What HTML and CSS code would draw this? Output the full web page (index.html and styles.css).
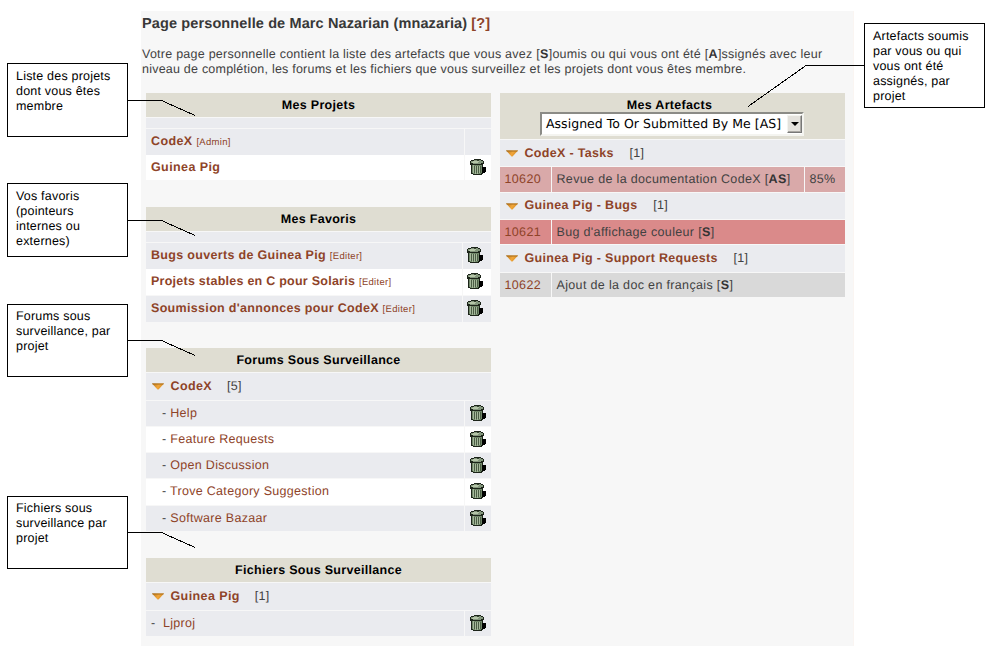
FILE: index.html
```html
<!DOCTYPE html>
<html lang="fr">
<head>
<meta charset="utf-8">
<title>Page personnelle</title>
<link rel="stylesheet" href="styles.css">
</head>
<body>
<svg class="defs" aria-hidden="true">
  <defs>
    <symbol id="trash" viewBox="0 0 16 16">
      <path fill="#1c2419" d="M4 0h7v1h2v1h1v3h-1v3h3v5h-3v2h-1v1H3v-1H1V6H0V2h1V1h3z"/>
      <path fill="#000" d="M12 8h4v5h-1v1h-3z"/>
      <path fill="#83967c" d="M4 1h7v1h2v2h-2v1H3V4H1V2h3z"/>
      <path fill="#b5c5a8" d="M3 2h6v1H3zM2 3h6v1H2z"/>
      <path fill="#35432f" d="M7 1h2v1H7z"/>
      <path fill="#6f8668" d="M2 6h10v8h-1v1H3v-1H2z"/>
      <path fill="#a5b89a" d="M3 6h1v8H3zM5 7h1v8H5zM7 7h1v8H7zM9 7h1v7H9z"/>
      <path fill="#4b5d45" d="M4 7h1v7H4zM6 7h1v7H6zM8 7h1v7H8zM10 7h1v7h-1z"/>
    </symbol>
    <linearGradient id="gold" x1="0" x2="1" y1="0" y2="0.3">
      <stop offset="0" stop-color="#b87418"/><stop offset=".6" stop-color="#f2a63a"/><stop offset="1" stop-color="#d48a20"/>
    </linearGradient>
    <symbol id="arrow" viewBox="0 0 12 7">
      <path fill="url(#gold)" d="M0 .5h12L6.5 6.5h-1z"/>
      <path fill="#a56d1c" d="M0 .5h12l-.8.9H.8z"/>
    </symbol>
  </defs>
</svg>
<main class="page">
  <h1 class="title">Page personnelle de Marc Nazarian (mnazaria) <a>[?]</a></h1>
  <p class="intro"><span class="l1">Votre page personnelle contient la liste des artefacts que vous avez [<b>S</b>]oumis ou qui vous ont été [<b>A</b>]ssignés avec leur</span><br><span class="l2">niveau de complétion, les forums et les fichiers que vous surveillez et les projets dont vous êtes membre.</span></p>
  <div class="columns">
    <div class="column">
      <section class="box projects">
        <h2>Mes Projets</h2>
        <div class="spacer"></div>
        <div class="row"><div><a class="strong">CodeX</a> <a class="small">[Admin]</a></div><div></div></div>
        <div class="row white"><div><a class="strong">Guinea Pig</a></div><div><svg class="trash"><use href="#trash"/></svg></div></div>
      </section>
      <section class="box bookmarks">
        <h2>Mes Favoris</h2>
        <div class="spacer"></div>
        <div class="row"><div><a class="strong">Bugs ouverts de Guinea Pig</a> <a class="small">[Editer]</a></div><div><svg class="trash"><use href="#trash"/></svg></div></div>
        <div class="row white"><div><a class="strong tight">Projets stables en C pour Solaris</a> <a class="small">[Editer]</a></div><div><svg class="trash"><use href="#trash"/></svg></div></div>
        <div class="row"><div><a class="strong">Soumission d'annonces pour CodeX</a> <a class="small">[Editer]</a></div><div><svg class="trash"><use href="#trash"/></svg></div></div>
      </section>
      <section class="box forums">
        <h2>Forums Sous Surveillance</h2>
        <div class="group"><svg class="arrow"><use href="#arrow"/></svg><a class="strong">CodeX</a><span class="count">[5]</span></div>
        <div class="row item"><div>- <a>Help</a></div><div><svg class="trash"><use href="#trash"/></svg></div></div>
        <div class="row item white"><div>- <a>Feature Requests</a></div><div><svg class="trash"><use href="#trash"/></svg></div></div>
        <div class="row item"><div>- <a>Open Discussion</a></div><div><svg class="trash"><use href="#trash"/></svg></div></div>
        <div class="row item white"><div>- <a>Trove Category Suggestion</a></div><div><svg class="trash"><use href="#trash"/></svg></div></div>
        <div class="row item"><div>- <a>Software Bazaar</a></div><div><svg class="trash"><use href="#trash"/></svg></div></div>
      </section>
      <section class="box files">
        <h2>Fichiers Sous Surveillance</h2>
        <div class="group"><svg class="arrow"><use href="#arrow"/></svg><a class="strong">Guinea Pig</a><span class="count">[1]</span></div>
        <div class="row file"><div>-&nbsp; <a>Ljproj</a></div><div><svg class="trash"><use href="#trash"/></svg></div></div>
      </section>
    </div>
    <div class="column">
      <section class="box artifacts">
        <div class="head"><h2>Mes Artefacts</h2>
          <div class="select"><span>Assigned To Or Submitted By Me [AS]</span><i class="drop"></i></div>
        </div>
        <div class="group"><svg class="arrow"><use href="#arrow"/></svg><a class="strong">CodeX - Tasks</a><span class="count">[1]</span></div>
        <div class="artifact pink"><div><a>10620</a></div><div>Revue de la documentation CodeX [<b>AS</b>]</div><div>85%</div></div>
        <div class="group"><svg class="arrow"><use href="#arrow"/></svg><a class="strong">Guinea Pig - Bugs</a><span class="count">[1]</span></div>
        <div class="artifact red wide"><div><a>10621</a></div><div>Bug d'affichage couleur [<b>S</b>]</div></div>
        <div class="group"><svg class="arrow"><use href="#arrow"/></svg><a class="strong">Guinea Pig - Support Requests</a><span class="count">[1]</span></div>
        <div class="artifact grey wide"><div><a>10622</a></div><div>Ajout de la doc en français [<b>S</b>]</div></div>
      </section>
    </div>
  </div>
</main>
<svg class="leaders" viewBox="0 0 994 654">
  <path d="M128 100.5H161.5L195 115.5M128 220.5H161.5L195 235.5M128 340.5H161.5L195 355.5M128 532.5H161.5L195 547.5M864 65.5H806L748 106.5"/>
</svg>
<aside class="note n1">Liste des projets<br>dont vous êtes<br>membre</aside>
<aside class="note n2">Vos favoris<br>(pointeurs<br>internes ou<br>externes)</aside>
<aside class="note n3">Forums sous<br>surveillance, par<br>projet</aside>
<aside class="note n4">Fichiers sous<br>surveillance par<br>projet</aside>
<aside class="note n5">Artefacts soumis<br>par vous ou qui<br>vous ont été<br>assignés, par<br>projet</aside>
</body>
</html>
```
FILE: styles.css
```css
* { box-sizing: border-box; }
body {
  margin: 0;
  height: 654px;
  position: relative;
  overflow: hidden;
  background: #fff;
  color: #414141;
  font: 12.5px/15px "Liberation Sans", Arial, sans-serif;
  letter-spacing: 0.3px;
  text-rendering: geometricPrecision;
}
.defs { position: absolute; width: 0; height: 0; }
a { color: #8e4328; }
.page {
  width: 713px;
  height: 635px;
  margin: 11px 0 0 141px;
  padding: 4px 0 0 1px;
  background: #f7f7f7;
  border-right: 1px solid #faf5f2;
  position: absolute;
}
.title { margin: 0; font-size: 14.5px; line-height: 18px; color: #383838; letter-spacing: 0.12px; }
.intro { margin: 14px 0 0; white-space: nowrap; }
.l1 { letter-spacing: 0.245px; }
.l2 { letter-spacing: 0.22px; }
.columns { display: flex; gap: 8.5px; margin: 16px 0 0 4px; }
.column { width: 345px; }
.box { display: flex; flex-direction: column; gap: 1px; }
.box > * { background: #eaebef; }
.box h2 {
  margin: 0;
  height: 24px;
  font-size: 12.5px;
  line-height: 24px;
  text-align: center;
  color: #000;
  background: #dfddd2;
}
.strong, b { font-weight: bold; letter-spacing: 0.4px; }
b { color: #333; }
.small { font-size: 9.5px; letter-spacing: 0.3px; }
.spacer { height: 10px; }
.box > .row { display: grid; grid-template-columns: 1fr 26px; gap: 1px; height: 25.3px; background: none; white-space: pre; }
.row > div { background: #eaebef; padding: 0 5px; line-height: 25px; }
.row.white > div { background: #fff; }
.trash { display: block; width: 16px; height: 16px; margin-top: 4px; shape-rendering: crispEdges; }
.projects > .row { height: 24.8px; }
.projects { height: 87px; }
.bookmarks { margin-top: 27px; height: 114px; }
.bookmarks .strong { letter-spacing: 0.32px; }
.bookmarks .strong.tight { letter-spacing: 0.25px; }
.box.bookmarks > .row { grid-template-columns: 1fr 28px; }
.bookmarks .row > div:last-child { padding-left: 4px; }
.forums { margin-top: 27px; height: 183px; }
.row.item > div:first-child { padding-left: 16px; }
.files { margin-top: 27px; }
.group { height: 26.6px; display: flex; align-items: center; padding-left: 6px; }
.arrow { width: 12px; height: 7px; margin: 1px 6.5px 0 0; }
.count { margin-left: 15px; }
.artifacts .group { height: 26.4px; }
.artifacts .group .strong { letter-spacing: 0.32px; }
.artifacts .arrow { margin-right: 7px; }
.artifacts .count { margin-left: 15.7px; }
.box .head { height: 46px; background: #dfddd2; display: flex; flex-direction: column; align-items: center; }
.head h2 { height: 19px; padding-right: 5px; }
.select {
  width: 264px;
  height: 24px;
  background: #fff;
  border: 2px solid;
  border-color: #8b8b86 #f4f4f0 #f4f4f0 #8b8b86;
  display: flex;
  justify-content: space-between;
  padding-left: 4px;
  color: #000;
  font: 12.5px/20px "DejaVu Sans", sans-serif;
  letter-spacing: 0.03px;
}
.drop {
  width: 15px;
  height: 18px;
  margin-top: 1px;
  background: #e4e2dd;
  border: 1px solid;
  border-color: #f4f4f0 #777 #777 #f4f4f0;
  box-shadow: inset -1px -1px #aaa8a4;
  display: grid;
  place-items: center;
}
.drop::before { content: ""; border: 4px solid transparent; border-top-color: #000; border-bottom: 0; }
.box > .artifact { display: grid; grid-template-columns: 51px 1fr 40px; gap: 1px; height: 24.2px; background: none; }
.box > .artifact.wide { grid-template-columns: 51px 1fr; }
.artifact > div { padding-left: 5px; line-height: 25.4px; white-space: nowrap; letter-spacing: 0.34px; }
.pink > div { background: #d9a9a9; }
.red > div { background: #da8a8a; }
.grey > div { background: #d9d9d9; }
.box > .artifact { overflow: hidden; }
.leaders { position: absolute; left: 0; top: 0; width: 994px; height: 654px; fill: none; stroke: #000; shape-rendering: crispEdges; }
.note {
  position: absolute;
  left: 7px;
  width: 121px;
  height: 74px;
  padding: 5px 8px;
  border: 1px solid #000;
  background: #fff;
  color: #000;
  white-space: nowrap;
  letter-spacing: 0.2px;
}
.n1 { top: 63px; }
.n2 { top: 183px; }
.n3 { top: 304px; height: 73px; padding-top: 4px; }
.n4 { top: 496px; height: 73px; padding-top: 4px; }
.n5 { top: 23px; left: 864px; height: 85px; }
```
